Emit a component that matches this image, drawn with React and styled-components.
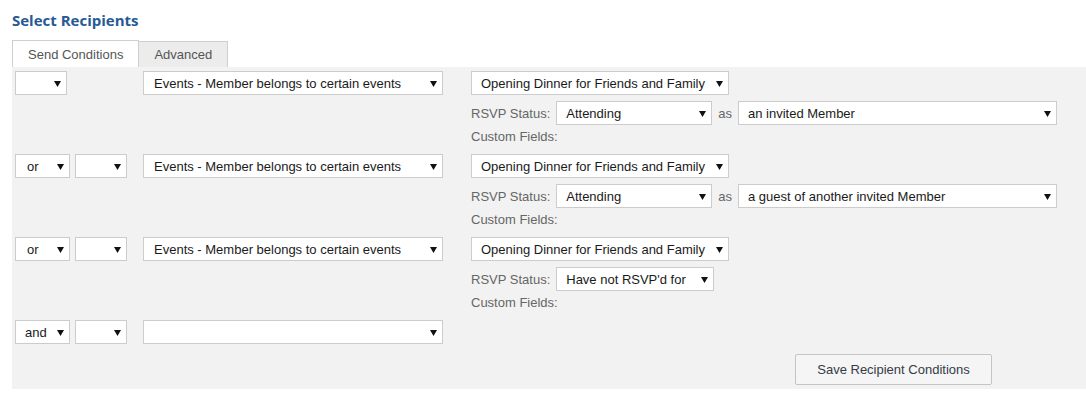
import React from "react";
import styled, { createGlobalStyle } from "styled-components";

const Global = createGlobalStyle`
  html, body { margin: 0; padding: 0; background: #fff; }
  body { font-family: "Liberation Sans", Arial, sans-serif; font-size: 13px; color: #222; }
`;

const Page = styled.div`
  padding: 10px 0 0 12px;
`;

const Title = styled.h2`
  margin: 0;
  font-family: "Open Sans", sans-serif;
  font-weight: 700;
  font-size: 15px;
  line-height: 20px;
  color: #275a94;
`;

const Tabs = styled.div`
  display: flex;
  align-items: flex-end;
  margin-top: 10px;
`;

const Tab = styled.div`
  box-sizing: border-box;
  height: ${(p) => (p.$active ? 27 : 26)}px;
  padding: 0 ${(p) => (p.$active ? 15 : 15)}px;
  display: flex;
  align-items: center;
  border: 1px solid #cfcfcf;
  border-bottom: none;
  background: ${(p) => (p.$active ? "#fff" : "#ececec")};
  color: #555;
  font-size: 13px;
  margin-left: ${(p) => (p.$active ? 0 : -1)}px;
`;

const Panel = styled.div`
  background: #f2f2f2;
  padding: 4px 0 4px 3px;
`;

const Condition = styled.div`
  display: grid;
  grid-template-columns: 128px 328px 1fr;
  align-items: start;
`;

const OpCell = styled.div`
  display: flex;
  gap: 5px;
`;

const Details = styled.div`
  display: flex;
  flex-direction: column;
  padding-bottom: 7px;
`;

const Line = styled.div`
  display: flex;
  align-items: center;
  gap: 6px;
  margin-top: 6px;
`;

const Label = styled.span`
  color: #666;
  font-size: 13px;
`;

const Fields = styled.div`
  color: #666;
  font-size: 13px;
  line-height: 20px;
  margin-top: 2px;
`;

const SelectBox = styled.div`
  box-sizing: border-box;
  width: ${(p) => p.$w}px;
  height: 24px;
  border: 1px solid #cccccc;
  background: #fff;
  display: flex;
  align-items: center;
  padding: 0 5px 0 ${(p) => p.$pl ?? 10}px;
  font-size: 13px;
  color: #1a1a1a;
  white-space: nowrap;
  overflow: hidden;
`;

const SelectText = styled.span`
  flex: 1;
`;

const Arrow = () => (
  <svg width="7" height="7" viewBox="0 0 7 7" style={{ flex: "none" }}>
    <polygon points="0,1 7,1 3.5,7" fill="#111" />
  </svg>
);

const Select = ({ w, pl, children }) => (
  <SelectBox $w={w} $pl={pl}>
    <SelectText>{children}</SelectText>
    <Arrow />
  </SelectBox>
);

const Footer = styled.div`
  display: flex;
  padding: 10px 0 0 780px;
`;

const Button = styled.button`
  box-sizing: border-box;
  width: 197px;
  height: 31px;
  background: #f5f5f5;
  border: 1px solid #c4c4c4;
  border-radius: 2px;
  font-family: "Liberation Sans", Arial, sans-serif;
  font-size: 13px;
  color: #363b47;
  padding: 0;
`;

const conditions = [
  { op: null, status: "Attending", statusW: 156, as: "an invited Member" },
  { op: "or", status: "Attending", statusW: 156, as: "a guest of another invited Member" },
  { op: "or", status: "Have not RSVP'd for", statusW: 158, as: null },
];

export default function App() {
  return (
    <>
      <Global />
      <Page>
        <Title>Select Recipients</Title>
        <Tabs>
          <Tab $active>Send Conditions</Tab>
          <Tab>Advanced</Tab>
        </Tabs>
        <Panel>
          {conditions.map((c, i) => (
            <Condition key={i}>
              <OpCell>
                {c.op ? (
                  <>
                    <Select w={55} pl={11}>{c.op}</Select>
                    <Select w={52} />
                  </>
                ) : (
                  <Select w={52} />
                )}
              </OpCell>
              <Select w={300}>Events - Member belongs to certain events</Select>
              <Details>
                <Select w={258} pl={9}>Opening Dinner for Friends and Family</Select>
                <Line>
                  <Label>RSVP Status:</Label>
                  <Select w={c.statusW} pl={9}>{c.status}</Select>
                  {c.as && (
                    <>
                      <Label>as</Label>
                      <Select w={319} pl={9}>{c.as}</Select>
                    </>
                  )}
                </Line>
                <Fields>Custom Fields:</Fields>
              </Details>
            </Condition>
          ))}
          <Condition>
            <OpCell>
              <Select w={55} pl={9}>and</Select>
              <Select w={52} />
            </OpCell>
            <Select w={300} />
          </Condition>
          <Footer>
            <Button>Save Recipient Conditions</Button>
          </Footer>
        </Panel>
      </Page>
    </>
  );
}
